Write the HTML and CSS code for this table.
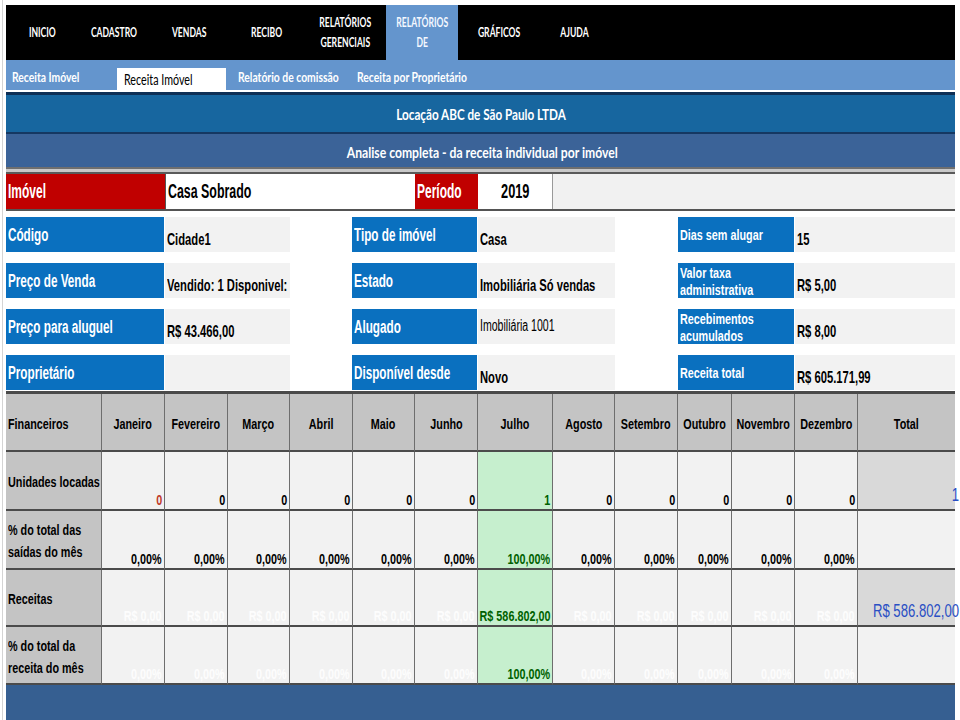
FILE: index.html
```html
<!DOCTYPE html>
<html lang="pt-BR">
<head>
<meta charset="utf-8">
<title>Receita Imóvel</title>
<link rel="stylesheet" href="styles.css">
</head>
<body>
<div class="page">
  <nav class="menu">
    <div class="mi w72"><span class="t">INICIO</span></div>
    <div class="mi w72"><span class="t">CADASTRO</span></div>
    <div class="mi w78"><span class="t">VENDAS</span></div>
    <div class="mi w77"><span class="t">RECIBO</span></div>
    <div class="mi w81"><span class="t">RELATÓRIOS<br>GERENCIAIS</span></div>
    <div class="mi w72 active"><span class="t">RELATÓRIOS<br>DE</span></div>
    <div class="mi w82"><span class="t">GRÁFICOS</span></div>
    <div class="mi w68"><span class="t">AJUDA</span></div>
  </nav>
  <div class="sub">
    <div class="si s1"><span class="t">Receita Imóvel</span></div>
    <div class="si s2"><span class="t">Receita Imóvel</span></div>
    <div class="si s3"><span class="t">Relatório de comissão</span></div>
    <div class="si s4"><span class="t">Receita por Proprietário</span></div>
  </div>
  <div class="sep"></div>
  <div class="band1"><span class="t">Locação ABC de São Paulo LTDA</span></div>
  <div class="band2"><span class="t">Analise completa - da receita individual por imóvel</span></div>
  <div class="dline"></div>
  <div class="selrow">
    <div class="red c1"><span class="t">Imóvel</span></div>
    <div class="white c2"><span class="t">Casa Sobrado</span></div>
    <div class="red c3"><span class="t">Período</span></div>
    <div class="white c4"><span class="t">2019</span></div>
    <div class="rest"></div>
  </div>
  <div class="info">
    <div class="lab"><span class="t">Código</span></div>
    <div class="val"><span class="t">Cidade1</span></div>
    <div class="gap"></div>
    <div class="lab"><span class="t">Tipo de imóvel</span></div>
    <div class="val"><span class="t">Casa</span></div>
    <div class="gap"></div>
    <div class="lab sm"><span class="t">Dias sem alugar</span></div>
    <div class="val"><span class="t">15</span></div>

    <div class="lab"><span class="t">Preço de Venda</span></div>
    <div class="val"><span class="t">Vendido: 1 Disponivel:</span></div>
    <div class="gap"></div>
    <div class="lab"><span class="t">Estado</span></div>
    <div class="val"><span class="t">Imobiliária Só vendas</span></div>
    <div class="gap"></div>
    <div class="lab sm two"><span class="t">Valor taxa<br>administrativa</span></div>
    <div class="val"><span class="t">R$ 5,00</span></div>

    <div class="lab"><span class="t">Preço para aluguel</span></div>
    <div class="val"><span class="t">R$ 43.466,00</span></div>
    <div class="gap"></div>
    <div class="lab"><span class="t">Alugado</span></div>
    <div class="val mid"><span class="t">Imobiliária 1001</span></div>
    <div class="gap"></div>
    <div class="lab sm two"><span class="t">Recebimentos<br>acumulados</span></div>
    <div class="val"><span class="t">R$ 8,00</span></div>

    <div class="lab"><span class="t">Proprietário</span></div>
    <div class="val"></div>
    <div class="gap"></div>
    <div class="lab"><span class="t">Disponível desde</span></div>
    <div class="val"><span class="t">Novo</span></div>
    <div class="gap"></div>
    <div class="lab sm"><span class="t">Receita total</span></div>
    <div class="val"><span class="t">R$ 605.171,99</span></div>
  </div>

  <div class="fin">
    <div class="hd first"><span class="t">Financeiros</span></div>
    <div class="hd"><span class="t">Janeiro</span></div>
    <div class="hd"><span class="t">Fevereiro</span></div>
    <div class="hd"><span class="t">Março</span></div>
    <div class="hd"><span class="t">Abril</span></div>
    <div class="hd"><span class="t">Maio</span></div>
    <div class="hd"><span class="t">Junho</span></div>
    <div class="hd"><span class="t">Julho</span></div>
    <div class="hd"><span class="t">Agosto</span></div>
    <div class="hd"><span class="t">Setembro</span></div>
    <div class="hd"><span class="t">Outubro</span></div>
    <div class="hd"><span class="t">Novembro</span></div>
    <div class="hd"><span class="t">Dezembro</span></div>
    <div class="hd last"><span class="t">Total</span></div>

    <div class="rl"><span class="t">Unidades locadas</span></div>
    <div class="v neg"><span class="t">0</span></div>
    <div class="v"><span class="t">0</span></div>
    <div class="v"><span class="t">0</span></div>
    <div class="v"><span class="t">0</span></div>
    <div class="v"><span class="t">0</span></div>
    <div class="v"><span class="t">0</span></div>
    <div class="v jul"><span class="t">1</span></div>
    <div class="v"><span class="t">0</span></div>
    <div class="v"><span class="t">0</span></div>
    <div class="v"><span class="t">0</span></div>
    <div class="v"><span class="t">0</span></div>
    <div class="v"><span class="t">0</span></div>
    <div class="v tot dk"><span class="t">1</span></div>

    <div class="rl"><span class="t">% do total das<br>saídas do mês</span></div>
    <div class="v"><span class="t">0,00%</span></div>
    <div class="v"><span class="t">0,00%</span></div>
    <div class="v"><span class="t">0,00%</span></div>
    <div class="v"><span class="t">0,00%</span></div>
    <div class="v"><span class="t">0,00%</span></div>
    <div class="v"><span class="t">0,00%</span></div>
    <div class="v jul"><span class="t">100,00%</span></div>
    <div class="v"><span class="t">0,00%</span></div>
    <div class="v"><span class="t">0,00%</span></div>
    <div class="v"><span class="t">0,00%</span></div>
    <div class="v"><span class="t">0,00%</span></div>
    <div class="v"><span class="t">0,00%</span></div>
    <div class="v tot"></div>

    <div class="rl"><span class="t">Receitas</span></div>
    <div class="v ghost"><span class="t">R$ 0,00</span></div>
    <div class="v ghost"><span class="t">R$ 0,00</span></div>
    <div class="v ghost"><span class="t">R$ 0,00</span></div>
    <div class="v ghost"><span class="t">R$ 0,00</span></div>
    <div class="v ghost"><span class="t">R$ 0,00</span></div>
    <div class="v ghost"><span class="t">R$ 0,00</span></div>
    <div class="v jul"><span class="t">R$ 586.802,00</span></div>
    <div class="v ghost"><span class="t">R$ 0,00</span></div>
    <div class="v ghost"><span class="t">R$ 0,00</span></div>
    <div class="v ghost"><span class="t">R$ 0,00</span></div>
    <div class="v ghost"><span class="t">R$ 0,00</span></div>
    <div class="v ghost"><span class="t">R$ 0,00</span></div>
    <div class="v tot dk"><span class="t">R$ 586.802,00</span></div>

    <div class="rl"><span class="t">% do total da<br>receita do mês</span></div>
    <div class="v ghost"><span class="t">0,00%</span></div>
    <div class="v ghost"><span class="t">0,00%</span></div>
    <div class="v ghost"><span class="t">0,00%</span></div>
    <div class="v ghost"><span class="t">0,00%</span></div>
    <div class="v ghost"><span class="t">0,00%</span></div>
    <div class="v ghost"><span class="t">0,00%</span></div>
    <div class="v jul"><span class="t">100,00%</span></div>
    <div class="v ghost"><span class="t">0,00%</span></div>
    <div class="v ghost"><span class="t">0,00%</span></div>
    <div class="v ghost"><span class="t">0,00%</span></div>
    <div class="v ghost"><span class="t">0,00%</span></div>
    <div class="v ghost"><span class="t">0,00%</span></div>
    <div class="v tot"></div>
  </div>
  <div class="foot"></div>
</div>
</body>
</html>
```

FILE: styles.css
```css
* { box-sizing: border-box; }
html, body { height: 100%; }
body {
  margin: 0 0 0 2px;
  border-left: 1px solid #d4d4d4;
  background: #fff;
  font-family: "Liberation Sans", Arial, sans-serif;
  color: #000;
  overflow: hidden;
}
.page {
  margin-left: 3px;
  width: 949px;
  padding-top: 5px;
}

/* condensed text run: the reference renders narrow (Arial Narrow / Calibri) type */
.t {
  display: inline-block;
  flex-shrink: 0;
  white-space: nowrap;
  transform: scaleX(var(--sx, 0.7));
  transform-origin: left center;
}

/* top menu */
.menu {
  display: flex;
  height: 55px;
  background: #000;
  font-family: Lato, "Liberation Sans", sans-serif;
  --sx: 0.66;
}
.mi {
  display: flex;
  align-items: center;
  justify-content: center;
  text-align: center;
  color: #fff;
  font-weight: bold;
  font-size: 13px;
  line-height: 20px;
  padding-bottom: 2px;
}
.mi .t { transform-origin: center; }
.mi.active { background: #6495cd; color: #f4f8ff; }
.w68 { width: 68px; }
.w72 { width: 72px; }
.w77 { width: 77px; }
.w78 { width: 78px; }
.w81 { width: 81px; }
.w82 { width: 82px; }

/* sub menu */
.sub {
  display: flex;
  height: 30px;
  background: #6495cd;
  font-family: Lato, "Liberation Sans", sans-serif;
  --sx: 0.74;
}
.si {
  display: flex;
  align-items: center;
  color: #fff;
  font-weight: bold;
  font-size: 14px;
  padding-top: 3px;
}
.s1 { width: 111px; padding-left: 6px; }
.s2 {
  width: 109px;
  padding-left: 7px;
  padding-top: 1px;
  background: #fff;
  color: #000;
  margin-top: 8px;
  height: 22px;
  font-weight: normal;
  font-size: 14.5px;
}
.s3 { width: 124px; padding-left: 12px; }
.s4 { padding-left: 7px; }

.sep {
  height: 5px;
  border-top: 2px solid #fff;
  background: #0e2f55;
}
.band1, .band2 {
  display: flex;
  align-items: center;
  justify-content: center;
  color: #fff;
  font-weight: bold;
  font-size: 16px;
  font-family: Lato, "Liberation Sans", sans-serif;
}
.band1 .t, .band2 .t { transform-origin: center; }
.band1 {
  height: 39px;
  background: #17669f;
  border-bottom: 2px solid #153862;
  padding-left: 2px;
  --sx: 0.73;
}
.band2 {
  height: 33px;
  background: #3b6398;
  padding-top: 2px;
  padding-left: 4px;
  --sx: 0.76;
}
.dline {
  height: 7px;
  border-top: 2px solid #6f6f6f;
  border-bottom: 2px solid #5a5a5a;
  background: #c9c9c9;
}

/* selection row */
.selrow {
  display: flex;
  height: 37px;
  border-bottom: 2px solid #545454;
  --sx: 0.6;
}
.selrow > div {
  display: flex;
  align-items: center;
  font-size: 20px;
  font-weight: bold;
}
.red { background: #c00000; color: #fff; }
.white { background: #fff; color: #000; }
.c1 { width: 159px; padding-left: 2px; }
.c2 { width: 250px; padding-left: 2px; border-left: 1px solid #555; --sx: 0.62; }
.c3 { width: 63px; padding-left: 2px; }
.c4 { width: 75px; justify-content: center; border-right: 1px solid #999; --sx: 0.64; }
.c4 .t { transform-origin: center; }
.rest { flex: 1; background: #f1f1f1; }

/* info grid */
.info {
  display: grid;
  grid-template-columns: 159px 125px 62px 126px 137px 63px 117px 160px;
  grid-auto-rows: 35px;
  row-gap: 11px;
  padding: 6px 0 1px;
}
.lab {
  background: #0a70bf;
  color: #fff;
  font-weight: bold;
  font-size: 18px;
  display: flex;
  align-items: center;
  padding: 2px 0 0 2px;
  margin-right: 1px;
  --sx: 0.65;
}
.lab.sm { font-size: 15px; --sx: 0.72; padding-top: 0; }
.lab.two { line-height: 17px; padding: 1px 0 0 2px; }
.val {
  background: #f2f2f2;
  display: flex;
  align-items: flex-end;
  padding: 0 0 2px 2px;
  font-weight: bold;
  font-size: 17px;
  --sx: 0.66;
}
.val.mid { align-items: center; font-weight: normal; padding-bottom: 2px; font-size: 16px; }

/* financial table */
.fin {
  display: grid;
  grid-template-columns: 96px 63px 63px 62px 63px 62px 63px 75px 62px 63px 54px 63px 63px 97px;
  grid-template-rows: 58px 59px 59px 57px 58px;
  border-top: 3px solid #4a4a4a;
  --sx: 0.72;
}
.fin > div {
  display: flex;
  border-right: 1px solid #6e6e6e;
  border-bottom: 2px solid #4b4b4b;
  font-weight: bold;
  font-size: 15px;
}
.hd {
  background: #c4c4c4;
  align-items: center;
  justify-content: center;
  padding-top: 3px;
}
.hd .t { transform-origin: center; }
.hd.first { justify-content: flex-start; padding-left: 2px; }
.hd.first .t { transform-origin: left center; }
.fin > .last, .fin > .tot { border-right: none; }
.rl {
  background: #c4c4c4;
  align-items: center;
  padding: 3px 0 0 2px;
  line-height: 22px;
}
.v {
  background: #f2f2f2;
  align-items: flex-end;
  justify-content: flex-end;
  padding: 0 2px 1px 0;
}
.v .t { transform-origin: right center; }
.v.neg { color: #c0392b; }
.v.jul { background: #c6efce; color: #006100; }
.v.ghost { color: #fdfdfd; }
.v.tot { color: #2a4fc4; padding-right: 0; padding-bottom: 3px; font-weight: normal; font-size: 18px; --sx: 0.73; }
.v.tot .t { margin-right: -4px; }
.v.tot.dk { background: #d9d9d9; }

.foot {
  height: 40px;
  background: #365f91;
}
```
